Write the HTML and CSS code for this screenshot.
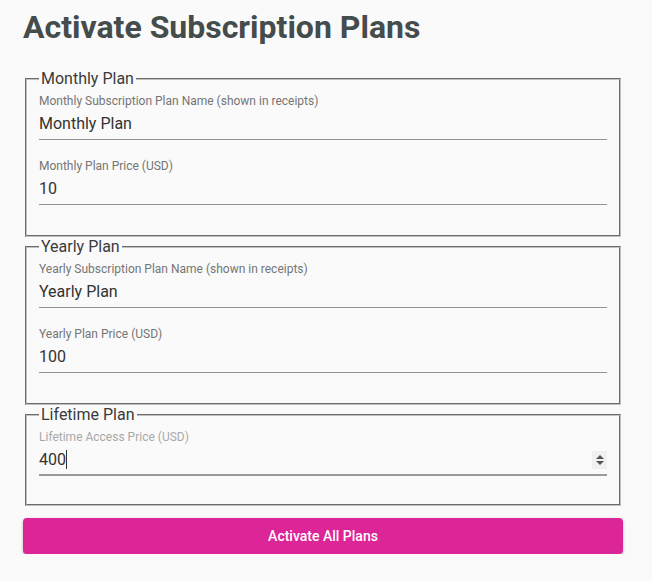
FILE: index.html
```html
<!DOCTYPE html>
<html lang="en">
<head>
    <meta charset="UTF-8">
    <meta name="viewport" content="width=device-width, initial-scale=1.0">
    <title>Activate Subscription Plans</title>
    <link rel="stylesheet" href="styles.css">
</head>
<body>
    <div class="container">
        <h1>Activate Subscription Plans</h1>
        <form class="plans-form">
            <fieldset class="plan">
                <legend>Monthly Plan</legend>
                <div class="field">
                    <label for="monthly-name">Monthly Subscription Plan Name (shown in receipts)</label>
                    <input type="text" id="monthly-name" value="Monthly Plan">
                </div>
                <div class="field">
                    <label for="monthly-price">Monthly Plan Price (USD)</label>
                    <input type="text" id="monthly-price" value="10">
                </div>
            </fieldset>
            <fieldset class="plan">
                <legend>Yearly Plan</legend>
                <div class="field">
                    <label for="yearly-name">Yearly Subscription Plan Name (shown in receipts)</label>
                    <input type="text" id="yearly-name" value="Yearly Plan">
                </div>
                <div class="field">
                    <label for="yearly-price">Yearly Plan Price (USD)</label>
                    <input type="text" id="yearly-price" value="100">
                </div>
            </fieldset>
            <fieldset class="plan">
                <legend>Lifetime Plan</legend>
                <div class="field focused">
                    <label for="lifetime-price">Lifetime Access Price (USD)</label>
                    <div class="number-input">
                        <span class="value">400<span class="caret"></span></span>
                        <span class="spinner">
                            <svg width="10" height="14" viewBox="0 0 10 14"><path d="M5 2 L9 6 L1 6 Z M1 8 L9 8 L5 12 Z" fill="#555"/></svg>
                        </span>
                    </div>
                </div>
            </fieldset>
            <button type="button" class="activate-btn">Activate All Plans</button>
        </form>
    </div>
</body>
</html>
```
FILE: styles.css
```css
body {
    font-family: Roboto, "Liberation Sans", sans-serif;
    background-color: #fafafa;
    margin: 8px;
    color: #333;
}
.container {
    width: 600px;
    padding: 0 15px;
}
h1 {
    font-size: 32px;
    font-weight: 700;
    color: #454c4c;
    margin: 0 0 23px;
}
.plan {
    margin: 0 2px;
    padding: 5px 12px 10px;
    border: 2px groove #c0c0c0;
}
legend {
    font-size: 16px;
    color: #3a3a3a;
    padding: 0 2px;
}
.field {
    margin-bottom: 18px;
}
.field + .field {
    margin-top: 2px;
}
.plan .field:last-child {
    margin-bottom: 20px;
}
.plan .focused:last-child {
    margin-bottom: 18px;
}
.field label {
    display: block;
    font-size: 12px;
    line-height: 16px;
    color: #757575;
}
.field input {
    display: block;
    width: 100%;
    box-sizing: border-box;
    font-family: inherit;
    font-size: 16px;
    line-height: 19px;
    color: #333;
    background: transparent;
    border: none;
    border-bottom: 1px solid #949494;
    padding: 5px 0 6px;
    outline: none;
}
.focused label {
    color: #a8a8a8;
}
.number-input {
    display: flex;
    align-items: center;
    justify-content: space-between;
    font-size: 16px;
    line-height: 19px;
    padding: 5px 0 5px;
    border-bottom: 2px solid #9b9b9b;
}
.caret {
    display: inline-block;
    width: 1px;
    height: 19px;
    background: #333;
    vertical-align: top;
}
.spinner {
    display: flex;
    align-items: center;
    justify-content: center;
    width: 15px;
    height: 18px;
    background: #f0f0f0;
}
.activate-btn {
    display: block;
    width: 100%;
    height: 36px;
    margin-top: 12px;
    border: none;
    border-radius: 4px;
    background-color: #dc2596;
    color: #fff;
    font-family: inherit;
    font-size: 14px;
    font-weight: 500;
    box-shadow: 0 2px 2px rgba(0, 0, 0, 0.2), 0 1px 4px rgba(0, 0, 0, 0.12);
    cursor: pointer;
}
```
